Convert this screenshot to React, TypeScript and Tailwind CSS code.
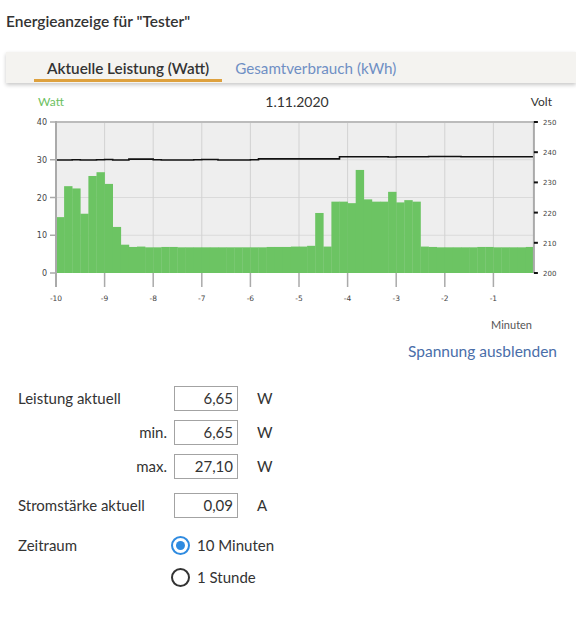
import React from "react";

const watts = [
  14.8, 23.0, 22.4, 15.7, 25.7, 26.7, 23.6, 12.2, 7.5, 6.9, 7.0, 6.8, 6.8, 6.9, 6.9, 6.8, 6.8, 6.8,
  6.8, 6.8, 6.8, 6.8, 6.8, 6.8, 6.8, 6.8, 6.9, 6.9, 6.9, 7.0, 7.0, 7.2, 15.9, 7.0, 18.9, 18.9, 18.5,
  27.3, 19.5, 18.9, 18.9, 21.5, 18.7, 19.3, 18.9, 7.0, 6.9, 6.8, 6.8, 6.8, 6.8, 6.8, 6.9, 6.9, 6.8,
  6.8, 6.8, 6.8, 6.9,
];

const volts = [
  237.4, 237.4, 237.5, 237.4, 237.4, 237.5, 237.6, 237.4, 237.4, 237.7, 237.7, 237.7, 237.5, 237.4,
  237.4, 237.4, 237.4, 237.5, 237.6, 237.6, 237.4, 237.4, 237.4, 237.4, 237.5, 237.8, 237.8, 237.8,
  237.8, 237.8, 237.8, 237.8, 237.8, 237.8, 237.8, 238.5, 238.5, 238.5, 238.5, 238.5, 238.5, 238.4,
  238.5, 238.5, 238.5, 238.5, 238.6, 238.6, 238.6, 238.6, 238.5, 238.5, 238.5, 238.5, 238.5, 238.5,
  238.5, 238.5, 238.5,
];

const X0 = 56;
const BAR = 8.1;
const MIN = 48.6;
const TOP = 122;
const BOTTOM = 273;
const wy = (w: number) => BOTTOM - (w / 40) * (BOTTOM - TOP);
const vy = (v: number) => TOP + ((250 - v) / 50) * (BOTTOM - TOP);

function Chart() {
  const right = X0 + watts.length * BAR;
  let line = `M ${X0} ${vy(volts[0])}`;
  volts.forEach((v, i) => {
    line += ` V ${vy(v)} H ${X0 + (i + 1) * BAR}`;
  });

  return (
    <svg width="576" height="248" viewBox="0 88 576 248" className="block">
      <text x="38" y="106" fontSize="12" fill="#6cbf62" fontFamily="Lato, sans-serif">
        Watt
      </text>
      <text x="297" y="107" fontSize="14" fill="#333" textAnchor="middle" fontFamily="Lato, sans-serif">
        1.11.2020
      </text>
      <text x="552" y="106" fontSize="12" fill="#333" textAnchor="end" fontFamily="Lato, sans-serif">
        Volt
      </text>

      <rect x={X0} y={TOP} width={right - X0} height={BOTTOM - TOP} fill="#eeeeee" />
      {[10, 20, 30].map((w) => (
        <line key={w} x1={X0} x2={right} y1={wy(w)} y2={wy(w)} stroke="#dadada" strokeWidth="1" />
      ))}
      {[1, 2, 3, 4, 5, 6, 7, 8, 9].map((m) => (
        <line key={m} x1={X0 + m * MIN} x2={X0 + m * MIN} y1={TOP} y2={BOTTOM} stroke="#d2d2d2" strokeWidth="1" />
      ))}

      {watts.map((w, i) => (
        <rect key={i} x={X0 + i * BAR} y={wy(w)} width={BAR + 0.3} height={BOTTOM - wy(w)} fill="#6cc463" />
      ))}

      <path d={line} fill="none" stroke="#111" strokeWidth="1.6" />

      <line x1={X0} x2={right} y1={TOP} y2={TOP} stroke="#bbbbbb" strokeWidth="2" />
      <line x1={X0} x2={X0} y1={TOP - 1} y2={287} stroke="#aaaaaa" strokeWidth="2" />
      <line x1={right} x2={right} y1={TOP - 1} y2={BOTTOM} stroke="#aaaaaa" strokeWidth="2" />
      {[1, 2, 3, 4, 5, 6, 7, 8, 9].map((m) => (
        <line key={m} x1={X0 + m * MIN} x2={X0 + m * MIN} y1={BOTTOM} y2={287} stroke="#aaaaaa" strokeWidth="1.5" />
      ))}
      {[0, 10, 20, 30, 40].map((w) => (
        <g key={w}>
          <line x1={X0 - 6} x2={X0} y1={wy(w)} y2={wy(w)} stroke="#aaaaaa" strokeWidth="1.5" />
          <text x="47" y={wy(w) + 3} fontSize="8" fill="#444" textAnchor="end" fontFamily="DejaVu Sans, sans-serif">
            {w}
          </text>
        </g>
      ))}
      {[200, 210, 220, 230, 240, 250].map((v) => (
        <g key={v}>
          <line x1={right} x2={right + 4} y1={vy(v)} y2={vy(v)} stroke="#111" strokeWidth="2" />
          <text x="543" y={vy(v) + 3} fontSize="7" fill="#444" fontFamily="DejaVu Sans, sans-serif">
            {v}
          </text>
        </g>
      ))}
      {[-10, -9, -8, -7, -6, -5, -4, -3, -2, -1].map((m) => (
        <text
          key={m}
          x={X0 + (m + 10) * MIN}
          y="301"
          fontSize="7.5"
          fill="#444"
          textAnchor="middle"
          fontFamily="DejaVu Sans, sans-serif"
        >
          {m}
        </text>
      ))}
      <text x="532" y="329" fontSize="11" fill="#555" textAnchor="end" fontFamily="Lato, sans-serif">
        Minuten
      </text>
    </svg>
  );
}

function ValueRow({ label, value, unit, right }: { label: string; value: string; unit: string; right?: boolean }) {
  return (
    <div className="flex items-center h-[25px]">
      <div className={right ? "w-[149px] text-right" : "w-[149px]"}>{label}</div>
      <div className="ml-[7px] w-[64px] h-[25px] border border-[#a3a3a3] text-right pr-[4px] leading-[23px]">
        {value}
      </div>
      <div className="ml-[19px]">{unit}</div>
    </div>
  );
}

function Radio({ checked, label }: { checked?: boolean; label: string }) {
  return (
    <div className="flex items-center gap-[7px]">
      {checked ? (
        <span className="w-[19px] h-[19px] rounded-full border-2 border-[#2f8be0] flex items-center justify-center">
          <span className="w-[9px] h-[9px] rounded-full bg-[#2f8be0]" />
        </span>
      ) : (
        <span className="w-[19px] h-[19px] rounded-full border-2 border-[#333]" />
      )}
      <span>{label}</span>
    </div>
  );
}

export default function App() {
  return (
    <div className="w-[576px] h-[617px] bg-white text-[#333] font-['Lato','Liberation_Sans',sans-serif] overflow-hidden">
      <h1 className="pl-[6px] pt-[10px] text-[15.5px] font-semibold leading-[22px]">Energieanzeige für "Tester"</h1>

      <div className="mt-[20px] ml-[6px] h-[31px] bg-[#f4f3f0] shadow-[0_2px_4px_rgba(0,0,0,0.22)] flex pl-[28px]">
        <div className="px-[13px] pt-[5px] h-[30px] border-b-[3px] border-[#dea13e] text-[15.3px] font-semibold leading-[22px]">
          Aktuelle Leistung (Watt)
        </div>
        <div className="px-[13px] pt-[5px] h-[30px] text-[15.2px] leading-[22px] text-[#6f8fc4]">
          Gesamtverbrauch (kWh)
        </div>
      </div>

      <div className="mt-[5px]">
        <Chart />
      </div>

      <div className="flex justify-end pr-[19px] mt-[4px]">
        <span className="text-[15.5px] leading-[22px] text-[#4a6ea9]">Spannung ausblenden</span>
      </div>

      <div className="mt-[24px] pl-[18px] text-[15px] flex flex-col">
        <ValueRow label="Leistung aktuell" value="6,65" unit="W" />
        <div className="mt-[9px]">
          <ValueRow label="min." value="6,65" unit="W" right />
        </div>
        <div className="mt-[9px]">
          <ValueRow label="max." value="27,10" unit="W" right />
        </div>
        <div className="mt-[14px]">
          <ValueRow label="Stromstärke aktuell" value="0,09" unit="A" />
        </div>
        <div className="mt-[16px] flex">
          <div className="w-[149px] leading-[22px]">Zeitraum</div>
          <div className="ml-[4px] flex flex-col gap-[10px] leading-[22px]">
            <Radio checked label="10 Minuten" />
            <Radio label="1 Stunde" />
          </div>
        </div>
      </div>
    </div>
  );
}
